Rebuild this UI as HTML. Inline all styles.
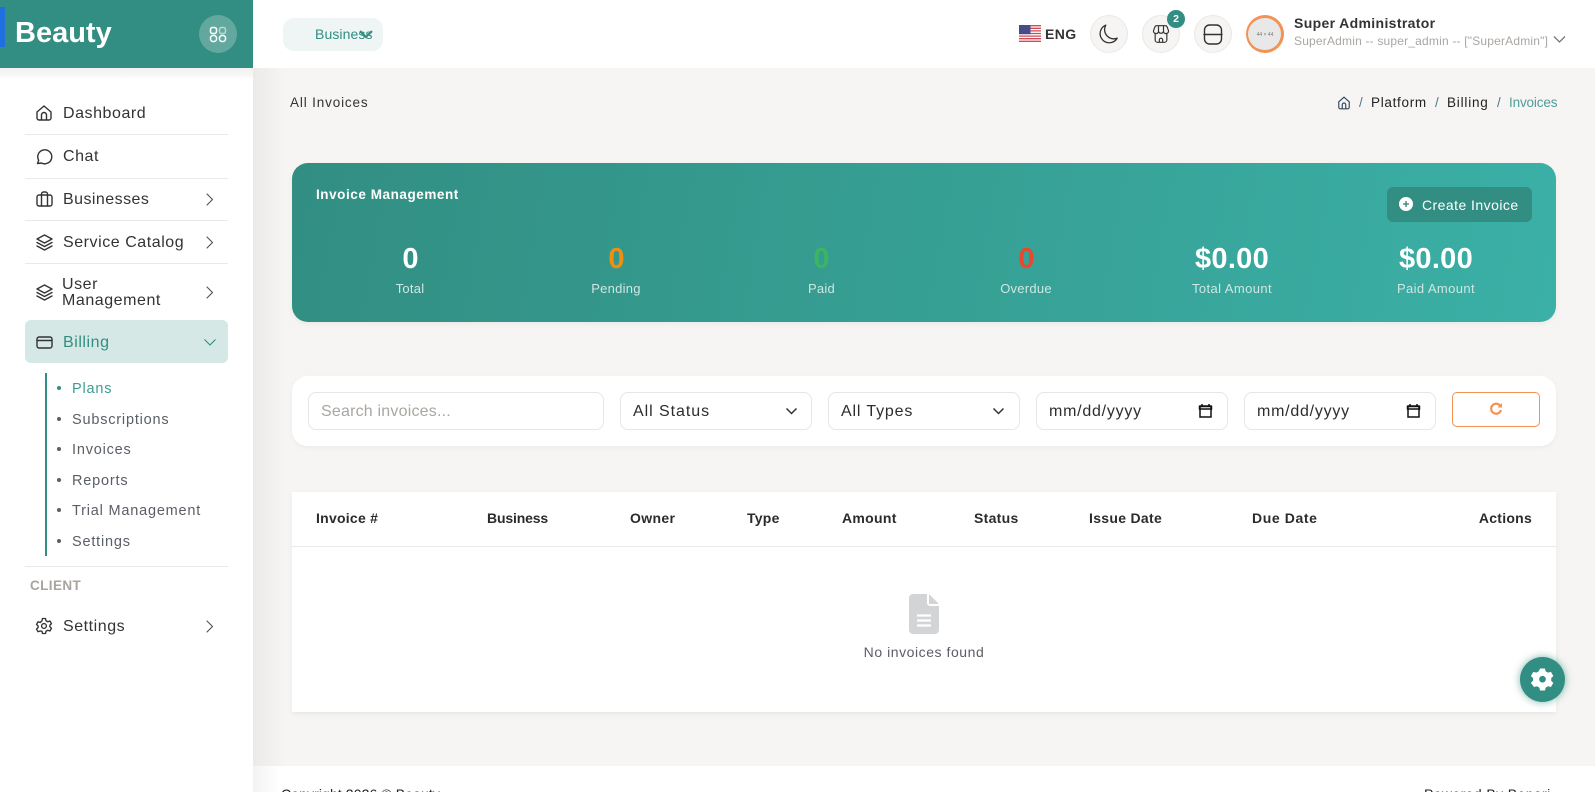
<!DOCTYPE html>
<html><head><meta charset="utf-8">
<style>
*{box-sizing:border-box}
html,body{margin:0;padding:0;width:1595px;height:792px;overflow:hidden;background:#f6f5f3;font-family:"Liberation Sans",sans-serif;color:#2b2b2b}
#w{position:relative;width:1595px;height:792px;overflow:hidden;background:#f6f5f3}
.a{position:absolute}
.t{position:absolute;line-height:0;white-space:nowrap}
.c{transform:translateX(-50%)}
.r{transform:translateX(-100%)}
.nav{font-size:16px;letter-spacing:.55px;color:#333}
.sub{font-size:14.5px;letter-spacing:.8px;color:#5a5f66}
.div{position:absolute;left:25px;width:203px;height:1px;background:#e9e9e9}
.dot{position:absolute;left:57px;width:4px;height:4px;border-radius:50%;background:#5a5f66}
svg{position:absolute;fill:none}
.ic{stroke:#333;stroke-width:1.4;stroke-linecap:round;stroke-linejoin:round}
.ch{stroke:#555;stroke-width:1.15;stroke-linecap:round;stroke-linejoin:round}
.circ{position:absolute;top:15px;width:38px;height:38px;border-radius:50%;background:#f6f5f3;border:1px solid #e8e8e8}
.num{font-size:29px;font-weight:700;color:#fff}
.lab{font-size:13px;letter-spacing:.25px;color:#cfe6e3}
.field{position:absolute;top:392px;height:38px;background:#fff;border:1px solid #e6e6ea;border-radius:8px}
.ft{font-size:16px;letter-spacing:.5px;color:#2d2d2d}
.th{font-size:14px;font-weight:700;letter-spacing:.25px;color:#2b2b2b;top:518px}
</style></head><body><div id="w">

<!-- main shade -->
<div class="a" style="left:253px;top:68px;width:32px;height:698px;background:linear-gradient(90deg,#ebeae8,#f6f5f3)"></div>

<!-- header -->
<div class="a" style="left:253px;top:0;width:1342px;height:68px;background:#fff"></div>
<div class="a" style="left:283px;top:18px;width:100px;height:33px;background:#eef5f4;border-radius:11px"></div>
<div class="t" style="left:315px;top:34px;font-size:14px;color:#328e82;letter-spacing:.1px">Business</div>
<svg style="left:358px;top:28px" width="16" height="12" viewBox="0 0 16 12"><path d="M2 3l6 6 6-6" stroke="#328e82" stroke-width="2"/></svg>

<!-- flag -->
<svg style="left:1019px;top:25px" width="22" height="17" viewBox="0 0 22 17">
<rect width="22" height="17" fill="#fff"/>
<path d="M0 .7h22M0 3.300h22M0 5.900h22M0 8.500h22M0 11.100h22M0 13.700h22M0 16.300h22" stroke="#cf4a58" stroke-width="1.300"/>
<rect width="11.500" height="9.200" fill="#454c86"/></svg>
<div class="t" style="left:1045px;top:34px;font-size:14px;font-weight:700;letter-spacing:.4px;color:#333">ENG</div>

<div class="circ" style="left:1090px"></div>
<svg style="left:1098px;top:23px" width="22" height="22" viewBox="0 0 24 24"><path class="ic" d="M21 16.500A10 10 0 0 1 8.500 2.300 10 10 0 1 0 21 16.500z" /></svg>
<div class="circ" style="left:1142px"></div>
<svg style="left:1151px;top:24px" width="20" height="20" viewBox="0 0 24 24"><path class="ic" d="M5 11v8a3 3 0 0 0 3 3h8a3 3 0 0 0 3-3v-8M3 8l1.500-4A2.500 2.500 0 0 1 7 2h10a2.500 2.500 0 0 1 2.500 2l1.500 4a3 3 0 0 1-6 1 3.200 3.200 0 0 1-6 0 3 3 0 0 1-6-1zM9 2L9 9M15 2v7M10 22v-3a2 2 0 0 1 4 0v3"/></svg>
<div class="a" style="left:1167px;top:10px;width:18px;height:18px;border-radius:50%;background:#328e82;color:#fff;font-size:10.500px;font-weight:700;text-align:center;line-height:18px">2</div>
<div class="circ" style="left:1194px"></div>
<svg style="left:1203px;top:24px" width="20" height="22" viewBox="0 0 20 22"><rect class="ic" x="1.500" y="1" width="17" height="19" rx="5"/><path class="ic" d="M1 10.500h18"/></svg>

<div class="a" style="left:1246px;top:15px;width:38px;height:38px;border-radius:50%;background:#e8e8e8;border:3px solid #f39255;border-left-width:2px"></div>
<div class="t c" style="left:1265px;top:34.500px;font-size:5px;color:#777">44 × 44</div>
<div class="t" style="left:1294px;top:22.500px;font-size:14px;font-weight:700;letter-spacing:.35px;color:#333">Super Administrator</div>
<div class="t" style="left:1294px;top:41px;font-size:12px;letter-spacing:.19px;color:#aaa6a2">SuperAdmin -- super_admin -- ["SuperAdmin"]</div>
<svg style="left:1553px;top:35px" width="13" height="9" viewBox="0 0 13 9"><path d="M1 1.500l5.500 5.500 5.500-5.500" stroke="#777" stroke-width="1.300"/></svg>

<!-- breadcrumb -->
<div class="t" style="left:290px;top:103px;font-size:13.500px;letter-spacing:.85px;color:#333">All Invoices</div>
<svg style="left:1337px;top:96px" width="14" height="14" viewBox="0 0 24 24"><path d="M3 10l9-8 9 8v9a3 3 0 0 1-3 3H6a3 3 0 0 1-3-3zM9 22v-7a3 3 0 0 1 6 0v7" stroke="#34495e" stroke-width="2"/></svg>
<div class="t" style="left:1359px;top:103px;font-size:13.500px;color:#4a7a8a">/</div>
<div class="t" style="left:1371px;top:103px;font-size:13.500px;letter-spacing:.7px;color:#222">Platform</div>
<div class="t" style="left:1435px;top:103px;font-size:13.500px;color:#4a7a8a">/</div>
<div class="t" style="left:1447px;top:103px;font-size:13.500px;letter-spacing:.8px;color:#222">Billing</div>
<div class="t" style="left:1497px;top:103px;font-size:13.500px;color:#4a7a8a">/</div>
<div class="t" style="left:1509px;top:103px;font-size:13.500px;letter-spacing:-.15px;color:#4f9d9a">Invoices</div>

<!-- sidebar -->
<div class="a" style="left:0;top:0;width:253px;height:792px;background:#fff"></div>
<div class="a" style="left:0;top:68px;width:253px;height:10px;background:linear-gradient(180deg,#eff0ef,#fbfbfb)"></div>
<div class="a" style="left:0;top:0;width:253px;height:68px;background:#328e82"></div>
<div class="a" style="left:0;top:7px;width:5px;height:40px;background:#1f6fe0"></div>
<div class="t" style="left:15px;top:33px;font-size:29px;font-weight:700;color:#fff">Beauty</div>
<div class="a" style="left:199px;top:15px;width:38px;height:38px;border-radius:50%;background:#62a89f"></div>
<svg style="left:209px;top:26px" width="18" height="17" viewBox="0 0 18 17" stroke="#fff" stroke-width="1.500"><rect x="1.500" y="1.500" width="6" height="6" rx="2"/><rect x="10.500" y="1.500" width="6" height="6" rx="2" stroke="#bcd8d3"/><rect x="1.500" y="9.500" width="6" height="6" rx="2.500"/><rect x="10.500" y="9.500" width="6" height="6" rx="2.500"/></svg>

<svg class="ic" style="left:36px;top:105px" width="16" height="16" viewBox="0 0 16 16"><path d="M1 7l7-6 7 6v6a2 2 0 0 1-2 2H3a2 2 0 0 1-2-2zM5.500 15v-5a2.500 2.500 0 0 1 5 0v5"/></svg>
<div class="t nav" style="left:63px;top:114px">Dashboard</div>
<div class="div" style="top:134px"></div>

<svg class="ic" style="left:36px;top:148px" width="17" height="17" viewBox="0 0 17 17"><path d="M1.500 15.500l1.200-3.200A7 7 0 1 1 5.500 15z"/></svg>
<div class="t nav" style="left:63px;top:157px">Chat</div>
<div class="div" style="top:178px"></div>

<svg class="ic" style="left:36px;top:191px" width="17" height="16" viewBox="0 0 17 16"><rect x="1" y="4" width="15" height="11" rx="2"/><path d="M5.500 15V3a2 2 0 0 1 2-2h2a2 2 0 0 1 2 2v12"/></svg>
<div class="t nav" style="left:63px;top:200px;letter-spacing:.45px">Businesses</div>
<svg class="ch" style="left:205px;top:193px" width="9" height="13" viewBox="0 0 9 13"><path d="M2 1l5.500 5.500L2 12"/></svg>
<div class="div" style="top:220px"></div>

<svg class="ic" style="left:36px;top:234px" width="17" height="17" viewBox="0 0 17 17"><path d="M8.500 1L16 5l-7.500 4L1 5zM1 8.500l7.500 4 7.500-4M1 12l7.500 4 7.500-4"/></svg>
<div class="t nav" style="left:63px;top:243px">Service Catalog</div>
<svg class="ch" style="left:205px;top:236px" width="9" height="13" viewBox="0 0 9 13"><path d="M2 1l5.500 5.500L2 12"/></svg>
<div class="div" style="top:263px"></div>

<svg class="ic" style="left:36px;top:284px" width="17" height="17" viewBox="0 0 17 17"><path d="M8.500 1L16 5l-7.500 4L1 5zM1 8.500l7.500 4 7.500-4M1 12l7.500 4 7.500-4"/></svg>
<div class="t nav" style="left:62px;top:285px">User</div>
<div class="t nav" style="left:62px;top:301px">Management</div>
<svg class="ch" style="left:205px;top:286px" width="9" height="13" viewBox="0 0 9 13"><path d="M2 1l5.500 5.500L2 12"/></svg>

<div class="a" style="left:25px;top:320px;width:203px;height:43px;background:#d5e8e5;border-radius:6px"></div>
<svg class="ic" style="left:36px;top:336px" width="17" height="13" viewBox="0 0 17 13"><rect x="1" y="1" width="15" height="11" rx="2"/><path d="M1 4.500h15"/></svg>
<div class="t nav" style="left:63px;top:343px;color:#328e82">Billing</div>
<svg style="left:203px;top:338px" width="14" height="9" viewBox="0 0 14 9"><path d="M1.500 1.500l5.500 5.500 5.500-5.500" stroke="#328e82" stroke-width="1.100"/></svg>

<div class="a" style="left:45px;top:373px;width:2px;height:183px;background:#328e82"></div>
<div class="dot" style="top:386px;background:#328e82"></div><div class="t sub" style="left:72px;top:388.500px;color:#3f9c8f">Plans</div>
<div class="dot" style="top:417px"></div><div class="t sub" style="left:72px;top:419.500px">Subscriptions</div>
<div class="dot" style="top:447px"></div><div class="t sub" style="left:72px;top:449.500px">Invoices</div>
<div class="dot" style="top:478px"></div><div class="t sub" style="left:72px;top:480.500px">Reports</div>
<div class="dot" style="top:508px"></div><div class="t sub" style="left:72px;top:510.500px">Trial Management</div>
<div class="dot" style="top:539px"></div><div class="t sub" style="left:72px;top:541.500px">Settings</div>
<div class="div" style="top:566px"></div>
<div class="t" style="left:30px;top:585.500px;font-size:13.500px;font-weight:700;letter-spacing:.4px;color:#aaa49f">CLIENT</div>
<svg style="left:35px;top:617px" width="18" height="18" viewBox="0 0 24 24"><circle cx="12" cy="12" r="3.200" stroke="#333" stroke-width="1.800"/><path stroke="#333" stroke-width="1.800" stroke-linejoin="round" d="M10 2h4l.7 3 2.300 1.300 3-.9 2 3.500-2.200 2.100v2l2.200 2.100-2 3.500-3-.9-2.300 1.300-.7 3h-4l-.7-3L7 18.700l-3 .9-2-3.500 2.200-2.100v-2L2 9.900l2-3.500 3 .9L9.300 5z"/></svg>
<div class="t nav" style="left:63px;top:627px">Settings</div>
<svg class="ch" style="left:205px;top:620px" width="9" height="13" viewBox="0 0 9 13"><path d="M2 1l5.500 5.500L2 12"/></svg>

<!-- stats card -->
<div class="a" style="left:292px;top:163px;width:1264px;height:159px;border-radius:16px;background:linear-gradient(100deg,#328e82,#3bb0a6);box-shadow:0 2px 6px rgba(0,0,0,.05)"></div>
<div class="t" style="left:316px;top:194.500px;font-size:13.500px;font-weight:700;letter-spacing:.56px;color:#fff">Invoice Management</div>
<div class="a" style="left:1387px;top:187px;width:145px;height:35px;border-radius:6px;background:#328e82"></div>
<div class="a" style="left:1399px;top:197px;width:14px;height:14px;border-radius:50%;background:#fff"></div>
<svg style="left:1399px;top:197px" width="14" height="14" viewBox="0 0 14 14"><path d="M7 4v6M4 7h6" stroke="#2f7f75" stroke-width="1.300"/></svg>
<div class="t" style="left:1422px;top:204.500px;font-size:14px;letter-spacing:.45px;color:#fff">Create Invoice</div>

<div class="t c num" style="left:410.500px;top:259px">0</div><div class="t c lab" style="left:410px;top:289px">Total</div>
<div class="t c num" style="left:616.500px;top:259px;color:#ee8f0f">0</div><div class="t c lab" style="left:616px;top:289px">Pending</div>
<div class="t c num" style="left:821.500px;top:259px;color:#3bb560">0</div><div class="t c lab" style="left:821.500px;top:289px">Paid</div>
<div class="t c num" style="left:1026.500px;top:259px;color:#e8492e">0</div><div class="t c lab" style="left:1026px;top:289px">Overdue</div>
<div class="t c num" style="left:1232px;top:259px;letter-spacing:.3px">$0.00</div><div class="t c lab" style="left:1232px;top:289px;letter-spacing:.4px">Total Amount</div>
<div class="t c num" style="left:1436px;top:259px;letter-spacing:.3px">$0.00</div><div class="t c lab" style="left:1436px;top:289px;letter-spacing:.4px">Paid Amount</div>

<!-- filter card -->
<div class="a" style="left:292px;top:376px;width:1264px;height:70px;border-radius:16px;background:#fff;box-shadow:0 2px 6px rgba(0,0,0,.04)"></div>
<div class="field" style="left:308px;width:296px"></div>
<div class="t ft" style="left:321px;top:412px;color:#aaa6a2;letter-spacing:.2px">Search invoices...</div>
<div class="field" style="left:620px;width:192px"></div>
<div class="t ft" style="left:633px;top:412px;letter-spacing:.95px">All Status</div>
<svg style="left:785px;top:407px" width="13" height="9" viewBox="0 0 13 9"><path d="M1.500 1.500l5 5 5-5" stroke="#333" stroke-width="1.500"/></svg>
<div class="field" style="left:828px;width:192px"></div>
<div class="t ft" style="left:841px;top:412px;letter-spacing:.85px">All Types</div>
<svg style="left:992px;top:407px" width="13" height="9" viewBox="0 0 13 9"><path d="M1.500 1.500l5 5 5-5" stroke="#333" stroke-width="1.500"/></svg>
<div class="field" style="left:1036px;width:192px"></div>
<div class="t ft" style="left:1049px;top:412px;letter-spacing:.75px">mm/dd/yyyy</div>
<svg style="left:1198px;top:403px" width="15" height="16" viewBox="0 0 15 16"><rect x="2" y="3" width="11" height="11" fill="#fff" stroke="#111" stroke-width="1.500"/><path d="M1.500 3.500h12v2.500h-12zM4 1v2M11 1v2" stroke="#111" stroke-width="1.500"/></svg>
<div class="field" style="left:1244px;width:192px"></div>
<div class="t ft" style="left:1257px;top:412px;letter-spacing:.75px">mm/dd/yyyy</div>
<svg style="left:1406px;top:403px" width="15" height="16" viewBox="0 0 15 16"><rect x="2" y="3" width="11" height="11" fill="#fff" stroke="#111" stroke-width="1.500"/><path d="M1.500 3.500h12v2.500h-12zM4 1v2M11 1v2" stroke="#111" stroke-width="1.500"/></svg>
<div class="a" style="left:1452px;top:392px;width:88px;height:35px;border:1px solid #f39255;border-radius:5px;background:#fff"></div>
<svg style="left:1489px;top:402px" width="14" height="14" viewBox="0 0 14 14"><path d="M11.500 4.200A5 5 0 1 0 12 8" stroke="#f39255" stroke-width="2.200"/><path d="M8.500 5.500h4.500V1z" fill="#f39255"/></svg>

<!-- table -->
<div class="a" style="left:292px;top:492px;width:1264px;height:220px;background:#fff;box-shadow:0 2px 5px rgba(0,0,0,.06)"></div>
<div class="a" style="left:292px;top:546px;width:1264px;height:1px;background:#e9e9e9"></div>
<div class="t th" style="left:316px">Invoice #</div>
<div class="t th" style="left:487px;letter-spacing:-.15px">Business</div>
<div class="t th" style="left:630px;letter-spacing:.35px">Owner</div>
<div class="t th" style="left:747px">Type</div>
<div class="t th" style="left:842px;letter-spacing:.3px">Amount</div>
<div class="t th" style="left:974px;letter-spacing:.3px">Status</div>
<div class="t th" style="left:1089px;letter-spacing:.3px">Issue Date</div>
<div class="t th" style="left:1252px;letter-spacing:.6px">Due Date</div>
<div class="t th r" style="left:1532px">Actions</div>
<svg style="left:909px;top:594px" width="30" height="40" viewBox="0 0 30 40"><path d="M4 0h14v9a3 3 0 0 0 3 3h9v24a4 4 0 0 1-4 4H4a4 4 0 0 1-4-4V4a4 4 0 0 1 4-4z" fill="#d2d4d6"/><path d="M20 0l10 10H20z" fill="#d2d4d6"/><path d="M8 21.500h14M8 26.500h14M8 31.500h14" stroke="#fff" stroke-width="2.200"/></svg>
<div class="t c" style="left:924px;top:651.500px;font-size:14px;letter-spacing:.55px;color:#5a5f66">No invoices found</div>

<!-- footer -->
<div class="a" style="left:253px;top:766px;width:1342px;height:26px;background:#fff"></div>
<div class="a" style="left:253px;top:766px;width:26px;height:26px;background:linear-gradient(90deg,#f3f3f2,#fff)"></div>
<div class="t" style="left:281px;top:794px;font-size:14px;letter-spacing:.1px;color:#222">Copyright 2026 © Beauty</div>
<div class="t" style="left:1424px;top:794px;font-size:14px;letter-spacing:.4px;color:#222">Powered By Bepari</div>

<!-- fab -->
<div class="a" style="left:1520px;top:657px;width:45px;height:45px;border-radius:50%;background:#328e82;box-shadow:0 0 8px rgba(50,142,130,.65)"></div>
<svg style="left:1531px;top:667px" width="23" height="24" viewBox="0 0 24 24"><path fill="#fff" fill-rule="evenodd" d="M9.500 1h5l.8 3 2.500 1.400 3-.8 2.500 4.300-2.200 2.200v2.800l2.200 2.200-2.500 4.300-3-.8-2.500 1.400-.8 3h-5l-.8-3-2.500-1.400-3 .8L-.1 16l2.200-2.200v-2.800L-.1 8.900l2.500-4.300 3 .8 2.500-1.400zM12 8.700a3.500 3.500 0 1 0 0 7 3.500 3.500 0 0 0 0-7z"/></svg>

</div></body></html>
